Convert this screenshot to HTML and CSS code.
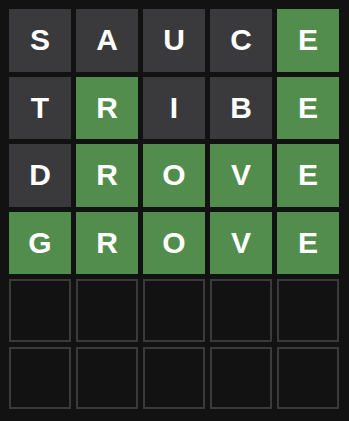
FILE: index.html
```html
<!DOCTYPE html>
<html lang="en">
<head>
  <meta charset="UTF-8">
  <title>Wordle Board</title>
  <link rel="stylesheet" href="styles.css">
</head>
<body>
  <div class="board">
    <div class="tile absent">S</div>
    <div class="tile absent">A</div>
    <div class="tile absent">U</div>
    <div class="tile absent">C</div>
    <div class="tile correct">E</div>

    <div class="tile absent">T</div>
    <div class="tile correct">R</div>
    <div class="tile absent">I</div>
    <div class="tile absent">B</div>
    <div class="tile correct">E</div>

    <div class="tile absent">D</div>
    <div class="tile correct">R</div>
    <div class="tile correct">O</div>
    <div class="tile correct">V</div>
    <div class="tile correct">E</div>

    <div class="tile correct">G</div>
    <div class="tile correct">R</div>
    <div class="tile correct">O</div>
    <div class="tile correct">V</div>
    <div class="tile correct">E</div>

    <div class="tile empty"></div>
    <div class="tile empty"></div>
    <div class="tile empty"></div>
    <div class="tile empty"></div>
    <div class="tile empty"></div>

    <div class="tile empty"></div>
    <div class="tile empty"></div>
    <div class="tile empty"></div>
    <div class="tile empty"></div>
    <div class="tile empty"></div>
  </div>
</body>
</html>
```

FILE: styles.css
```css
* {
  box-sizing: border-box;
}
body {
  margin: 0;
  background: #121213;
  font-family: 'Liberation Sans', Arial, sans-serif;
}
.board {
  display: grid;
  grid-template-columns: repeat(5, 62px);
  grid-template-rows: repeat(6, 1fr);
  gap: 5px;
  width: 330px;
  height: 400px;
  margin: 9px 0 0 9px;
}
.tile {
  display: flex;
  justify-content: center;
  align-items: center;
  color: #ffffff;
  font-size: 30px;
  font-weight: bold;
  text-transform: uppercase;
}
.absent {
  background: #3a3a3c;
}
.correct {
  background: #538d4e;
}
.empty {
  border: 2px solid #3a3a3c;
}
```
